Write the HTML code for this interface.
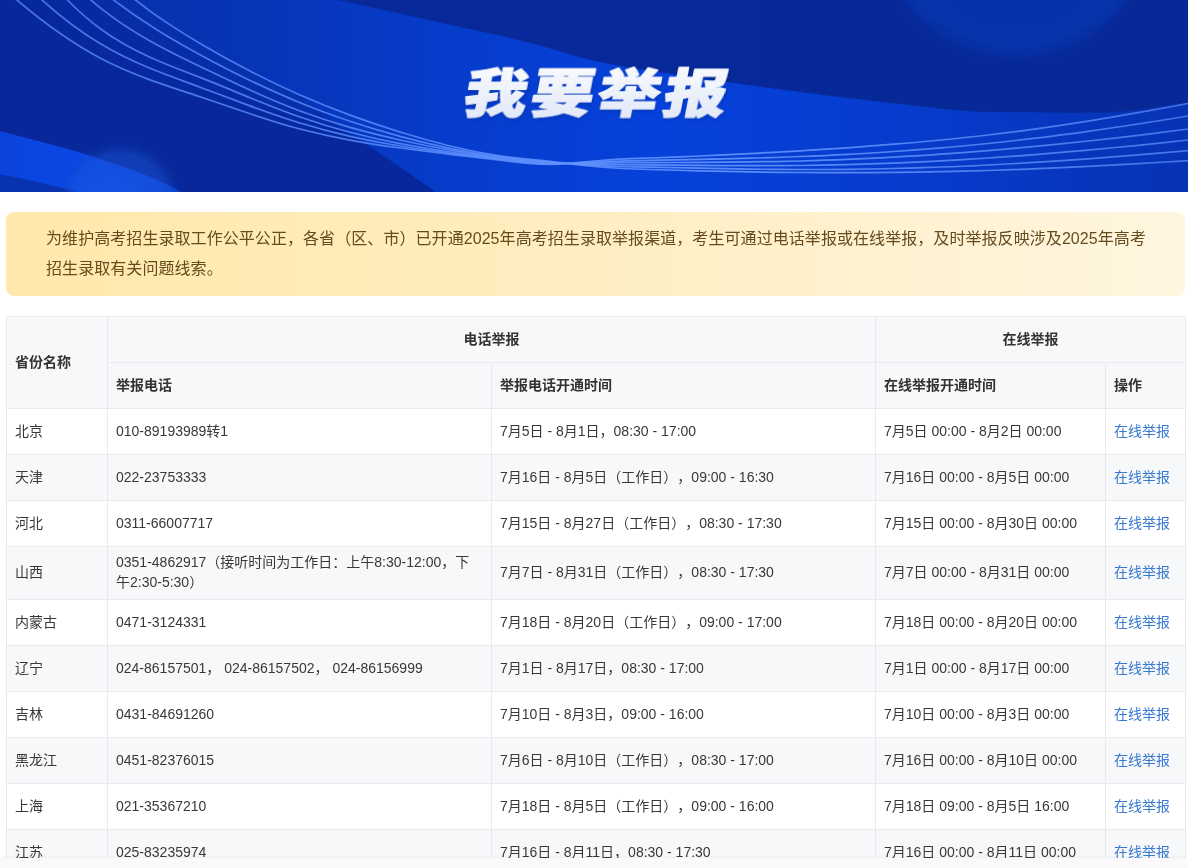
<!DOCTYPE html>
<html lang="zh-CN">
<head>
<meta charset="utf-8">
<title>我要举报</title>
<style>
*{box-sizing:border-box;}
html,body{margin:0;padding:0;background:#fff;}
body{text-spacing-trim:space-all;width:1188px;height:868px;overflow:hidden;position:relative;font-family:"Liberation Sans","Noto Sans CJK SC",sans-serif;font-size:14px;color:#333;}
.banner{position:absolute;left:0;top:0;width:1188px;height:192px;overflow:hidden;background:#0a2a9c;}
.banner svg{display:block;}
.notice{will-change:transform;position:absolute;left:6px;top:212px;width:1179px;height:84px;border-radius:8px;background:linear-gradient(90deg,#ffe8ab 0%,#ffeec2 50%,#fff6e0 100%);padding:12px 40px;font-size:16px;line-height:30px;color:#664b1e;letter-spacing:0.066px;font-family:"Liberation Sans","Noto Sans CJK SC",sans-serif;white-space:nowrap;}
table{will-change:transform;position:absolute;left:6px;top:316px;width:1180px;border-collapse:separate;border-spacing:0;border-top:1px solid #e8eaed;border-left:1px solid #e8eaed;table-layout:fixed;}
th,td{border-right:1px solid #e8eaed;border-bottom:1px solid #e8eaed;padding:5px 8px 7px;height:46px;line-height:20px;text-align:left;vertical-align:middle;font-size:14px;color:#383838;font-weight:normal;}
th{background:#f7f8fa;font-weight:bold;color:#333;}
th.c{text-align:center;}
tr.s td{background:#f7f8fa;}
td a{color:#3579d0;text-decoration:none;}
.foot{position:absolute;left:0;top:858px;width:1188px;height:10px;background:#fafafa;box-shadow:0 -1px 3px rgba(0,0,0,.05);}
</style>
</head>
<body>
<div class="banner">
<svg width="1188" height="192" viewBox="0 0 1188 192">
<defs>
<linearGradient id="gbase" x1="0" y1="0" x2="1188" y2="0" gradientUnits="userSpaceOnUse">
<stop offset="0" stop-color="#0730aa"/><stop offset="0.2" stop-color="#0734b5"/><stop offset="0.38" stop-color="#063cca"/><stop offset="0.55" stop-color="#0541da"/><stop offset="0.75" stop-color="#063cce"/><stop offset="1" stop-color="#0732b4"/></linearGradient>
<linearGradient id="gup" x1="338" y1="0" x2="1188" y2="0" gradientUnits="userSpaceOnUse"><stop offset="0" stop-color="#07299a"/><stop offset="1" stop-color="#072896"/></linearGradient>
<radialGradient id="gglow" cx="1016" cy="-83" r="148" gradientUnits="userSpaceOnUse"><stop offset="0" stop-color="#062fa4"/><stop offset="0.86" stop-color="#0733ab"/><stop offset="0.93" stop-color="#0731a8" stop-opacity="0.7"/><stop offset="1" stop-color="#072896" stop-opacity="0"/></radialGradient>
<radialGradient id="gglow2" cx="120" cy="204" r="64" gradientUnits="userSpaceOnUse"><stop offset="0" stop-color="#2264e6" stop-opacity="0.5"/><stop offset="0.78" stop-color="#1c58d8" stop-opacity="0.42"/><stop offset="1" stop-color="#1040b8" stop-opacity="0"/></radialGradient>
<linearGradient id="gband" x1="0" y1="0" x2="190" y2="0" gradientUnits="userSpaceOnUse"><stop offset="0" stop-color="#0a44dc"/><stop offset="0.5" stop-color="#0a48e6"/><stop offset="1" stop-color="#0a40d4"/></linearGradient>
<linearGradient id="gtxt" x1="0" y1="0" x2="0" y2="1"><stop offset="0" stop-color="#ffffff"/><stop offset="1" stop-color="#dde5f6"/></linearGradient>
<linearGradient id="gline" x1="0" y1="0" x2="1188" y2="0" gradientUnits="userSpaceOnUse"><stop offset="0" stop-color="#4f7ff0"/><stop offset="0.45" stop-color="#5e90ff"/><stop offset="0.6" stop-color="#6a9aff"/><stop offset="1" stop-color="#4f80f0"/></linearGradient>
<filter id="ts" x="-10%" y="-10%" width="120%" height="130%"><feDropShadow dx="1" dy="2" stdDeviation="1.5" flood-color="#06207a" flood-opacity="0.28"/></filter>
</defs>
<rect width="1188" height="192" fill="url(#gbase)"/>
<path d="M-5,-10 L9.0,-10 L9.0,-6.9 L18.0,0.9 L27.1,8.4 L36.1,15.6 L45.2,22.6 L54.2,29.3 L63.3,35.6 L72.3,41.7 L81.4,47.4 L90.4,52.7 L99.5,57.7 L108.5,62.4 L117.6,66.6 L126.6,70.6 L135.7,74.4 L144.7,77.9 L153.8,81.2 L162.8,84.4 L171.9,87.5 L180.9,90.5 L190.0,93.5 L199.0,96.5 L208.0,99.5 L217.1,102.6 L226.1,105.7 L235.2,108.7 L244.2,111.8 L253.3,114.8 L262.3,117.8 L271.4,120.7 L280.4,123.4 L289.5,126.1 L298.5,128.6 L307.6,131.0 L316.6,133.2 L325.7,135.2 L334.7,137.1 L343.8,139.0 L352.8,140.6 L361.9,142.2 L440,195 L-5,195 Z" fill="#08289a" fill-opacity="1"/>
<path d="M-5,-10 L34.0,-10 L34.0,-7.3 L42.2,0.2 L50.4,7.4 L58.7,14.2 L66.9,20.8 L75.1,26.9 L83.3,32.7 L91.5,38.2 L99.8,43.4 L108.0,48.1 L116.2,52.6 L124.4,56.8 L132.6,60.7 L140.9,64.4 L149.1,67.9 L157.3,71.2 L165.5,74.4 L173.7,77.5 L182.0,80.6 L190.2,83.6 L198.4,86.6 L206.6,89.7 L214.8,92.7 L223.1,95.8 L231.3,98.9 L239.5,102.0 L247.7,105.0 L255.9,108.0 L264.2,111.0 L272.4,113.9 L280.6,116.7 L288.8,119.5 L297.0,122.1 L305.3,124.6 L313.5,127.0 L321.7,129.3 L329.9,131.4 L338.2,133.5 L346.4,135.4 L354.6,137.3 L440,195 L-5,195 Z" fill="#08289a" fill-opacity="0.28"/>
<path d="M-5,-10 L59.3,-10 L59.3,-8.4 L66.6,-0.7 L74.0,6.5 L81.3,13.3 L88.6,19.6 L95.9,25.4 L103.3,30.9 L110.6,35.9 L117.9,40.5 L125.2,44.8 L132.6,48.8 L139.9,52.5 L147.2,56.0 L154.6,59.3 L161.9,62.4 L169.2,65.4 L176.5,68.3 L183.9,71.1 L191.2,74.0 L198.5,76.8 L205.9,79.7 L213.2,82.7 L220.5,85.6 L227.8,88.6 L235.2,91.6 L242.5,94.7 L249.8,97.7 L257.1,100.6 L264.5,103.6 L271.8,106.5 L279.1,109.3 L286.5,112.1 L293.8,114.8 L301.1,117.4 L308.4,119.9 L315.8,122.3 L323.1,124.6 L330.4,126.8 L337.7,128.9 L345.1,130.9 L440,195 L-5,195 Z" fill="#08289a" fill-opacity="0.28"/>
<path d="M-5,-10 L83.0,-10 L83.0,-7.8 L89.4,-1.5 L95.7,4.1 L102.1,9.3 L108.5,14.2 L114.9,18.8 L121.2,23.3 L127.6,27.5 L134.0,31.5 L140.4,35.4 L146.7,39.2 L153.1,42.7 L159.5,46.2 L165.9,49.6 L172.2,52.9 L178.6,56.1 L185.0,59.2 L191.3,62.3 L197.7,65.4 L204.1,68.5 L210.5,71.5 L216.8,74.6 L223.2,77.6 L229.6,80.6 L236.0,83.6 L242.3,86.6 L248.7,89.5 L255.1,92.4 L261.4,95.2 L267.8,98.0 L274.2,100.7 L280.6,103.4 L286.9,105.9 L293.3,108.5 L299.7,110.9 L306.1,113.2 L312.4,115.5 L318.8,117.7 L325.2,119.8 L331.6,121.8 L440,195 L-5,195 Z" fill="#08289a" fill-opacity="0.28"/>
<path d="M-5,-10 L105.6,-10 L105.6,-6.2 L110.8,-2.2 L116.0,1.8 L121.1,5.6 L126.3,9.4 L131.5,13.0 L136.7,16.6 L141.8,20.0 L147.0,23.4 L152.2,26.8 L157.4,30.0 L162.5,33.2 L167.7,36.3 L172.9,39.4 L178.1,42.4 L183.3,45.4 L188.4,48.3 L193.6,51.2 L198.8,54.0 L204.0,56.9 L209.1,59.6 L214.3,62.4 L219.5,65.1 L224.7,67.8 L229.9,70.4 L235.0,73.0 L240.2,75.6 L245.4,78.2 L250.6,80.7 L255.7,83.1 L260.9,85.6 L266.1,88.0 L271.3,90.3 L276.4,92.6 L281.6,94.9 L286.8,97.2 L292.0,99.4 L297.2,101.5 L302.3,103.7 L307.5,105.7 L440,195 L-5,195 Z" fill="#08289a" fill-opacity="0.28"/>
<path d="M-5,-10 L127.5,-10 L127.5,-6.5 L131.9,-2.9 L136.3,0.7 L140.8,4.1 L145.2,7.5 L149.6,10.8 L154.0,14.0 L158.5,17.1 L162.9,20.1 L167.3,23.1 L171.7,26.0 L176.2,28.9 L180.6,31.6 L185.0,34.4 L189.4,37.1 L193.8,39.8 L198.3,42.4 L202.7,45.0 L207.1,47.6 L211.5,50.1 L216.0,52.6 L220.4,55.1 L224.8,57.6 L229.2,60.0 L233.7,62.4 L238.1,64.8 L242.5,67.1 L246.9,69.5 L251.3,71.7 L255.8,74.0 L260.2,76.2 L264.6,78.5 L269.0,80.6 L273.5,82.8 L277.9,84.9 L282.3,87.0 L286.7,89.0 L291.2,91.0 L295.6,93.0 L300.0,95.0 L440,195 L-5,195 Z" fill="#08289a" fill-opacity="0.28"/>
<path d="M300.0,-9.0 C312.7,-6.0 325.3,-2.9 338.0,0.0 C356.8,4.3 375.7,8.5 394.5,12.6 C413.3,16.7 432.2,20.8 451.0,25.0 C463.7,27.8 476.3,30.5 489.0,33.3 C501.7,36.0 514.3,38.9 527.0,42.0 C539.2,45.0 551.3,48.8 563.5,52.4 C575.7,56.0 587.8,59.5 600.0,62.0 C616.7,65.4 633.3,68.2 650.0,70.7 C666.7,73.2 683.3,75.5 700.0,78.0 C716.7,80.5 733.3,82.9 750.0,85.3 C766.7,87.6 783.3,89.8 800.0,92.0 C816.7,94.2 833.3,96.3 850.0,98.3 C866.7,100.4 883.3,102.3 900.0,104.0 C914.7,105.5 929.3,107.4 944.0,109.0 C958.7,110.6 973.3,111.8 988.0,112.0 C1006.7,112.2 1025.3,112.4 1044.0,112.5 C1062.7,112.6 1081.3,112.7 1100.0,112.7 C1114.7,112.7 1129.3,111.1 1144.0,109.0 C1158.7,106.9 1173.3,104.2 1188.0,102.0 C1202.0,99.9 1216.0,97.0 1230.0,94.0 L1230,-10 L300,-10 Z" fill="url(#gup)"/>
<path d="M300.0,-9.0 C312.7,-6.0 325.3,-2.9 338.0,0.0 C356.8,4.3 375.7,8.5 394.5,12.6 C413.3,16.7 432.2,20.8 451.0,25.0 C463.7,27.8 476.3,30.5 489.0,33.3 C501.7,36.0 514.3,38.9 527.0,42.0 C539.2,45.0 551.3,48.8 563.5,52.4 C575.7,56.0 587.8,59.5 600.0,62.0 C616.7,65.4 633.3,68.2 650.0,70.7 C666.7,73.2 683.3,75.5 700.0,78.0 C716.7,80.5 733.3,82.9 750.0,85.3 C766.7,87.6 783.3,89.8 800.0,92.0 C816.7,94.2 833.3,96.3 850.0,98.3 C866.7,100.4 883.3,102.3 900.0,104.0 C914.7,105.5 929.3,107.4 944.0,109.0 C958.7,110.6 973.3,111.8 988.0,112.0 C1006.7,112.2 1025.3,112.4 1044.0,112.5 C1062.7,112.6 1081.3,112.7 1100.0,112.7 C1114.7,112.7 1129.3,111.1 1144.0,109.0 C1158.7,106.9 1173.3,104.2 1188.0,102.0 C1202.0,99.9 1216.0,97.0 1230.0,94.0 L1230,-10 L300,-10 Z" fill="url(#gglow)"/>
<path d="M-5,130 C30,139 70,148 121,166 C150,176 170,185 185,195 L-5,195 Z" fill="url(#gband)"/>
<path d="M-5,173.5 C20,178 55,185 88,195 L-5,195 Z" fill="#0932b0"/>
<circle cx="120" cy="204" r="64" fill="url(#gglow2)"/>
<g fill="none" stroke="url(#gline)" stroke-width="1.7" stroke-opacity="0.85">
<path d="M9.0,-6.9 C11.7,-4.6 14.3,-2.3 17.0,0.0 C30.8,11.7 44.7,22.6 58.5,32.3 C72.3,42.0 86.2,50.7 100.0,58.0 C116.7,66.8 133.3,73.7 150.0,79.9 C166.7,86.0 183.3,91.2 200.0,96.8 C216.7,102.4 233.3,108.2 250.0,113.7 C266.7,119.3 283.3,124.6 300.0,129.0 C316.7,133.4 333.3,137.1 350.0,140.1 C366.7,143.2 383.3,145.7 400.0,148.0 C416.7,150.3 433.3,152.3 450.0,154.3 C466.7,156.2 483.3,158.1 500.0,160.2 C516.7,162.3 533.3,164.5 550.0,164.4 C566.7,164.3 583.3,161.9 600.0,160.5 C616.7,159.1 633.3,158.6 650.0,158.0 C666.7,157.4 683.3,156.8 700.0,156.0 C716.7,155.3 733.3,154.5 750.0,153.6 C766.7,152.8 783.3,151.8 800.0,150.8 C815.7,149.9 831.3,148.9 847.0,147.8 C862.7,146.7 878.3,145.5 894.0,144.2 C909.7,143.0 925.3,141.6 941.0,140.0 C956.7,138.5 972.3,136.8 988.0,135.0 C1004.7,133.0 1021.3,130.9 1038.0,128.6 C1054.7,126.3 1071.3,123.8 1088.0,121.1 C1104.7,118.5 1121.3,115.7 1138.0,112.7 C1154.7,109.8 1171.3,106.7 1188.0,103.5 C1189.3,103.2 1190.7,103.0 1192.0,102.7"/>
<path d="M34.0,-7.3 C36.7,-4.8 39.3,-2.4 42.0,0.0 C61.3,17.3 80.7,31.9 100.0,43.5 C116.7,53.5 133.3,61.4 150.0,68.3 C166.7,75.1 183.3,81.0 200.0,87.2 C216.7,93.4 233.3,99.7 250.0,105.9 C266.7,112.0 283.3,117.9 300.0,123.0 C316.7,128.1 333.3,132.5 350.0,136.3 C366.7,140.0 383.3,143.2 400.0,146.0 C416.7,148.8 433.3,151.1 450.0,153.3 C466.7,155.4 483.3,157.4 500.0,159.4 C516.7,161.4 533.3,163.5 550.0,163.8 C566.7,164.1 583.3,162.7 600.0,161.8 C616.7,160.9 633.3,160.6 650.0,160.3 C666.7,160.0 683.3,159.7 700.0,159.3 C716.7,159.0 733.3,158.6 750.0,158.1 C766.7,157.7 783.3,157.2 800.0,156.5 C815.7,155.9 831.3,155.2 847.0,154.3 C862.7,153.5 878.3,152.6 894.0,151.5 C909.7,150.4 925.3,149.2 941.0,147.9 C956.7,146.6 972.3,145.1 988.0,143.5 C1004.7,141.8 1021.3,139.9 1038.0,137.9 C1054.7,135.9 1071.3,133.7 1088.0,131.4 C1104.7,129.1 1121.3,126.6 1138.0,124.0 C1154.7,121.5 1171.3,118.8 1188.0,116.0 C1189.3,115.8 1190.7,115.6 1192.0,115.3"/>
<path d="M59.3,-8.4 C62.0,-5.5 64.6,-2.7 67.3,0.0 C78.2,11.1 89.1,20.5 100.0,28.5 C116.7,40.8 133.3,49.7 150.0,57.2 C166.7,64.8 183.3,70.9 200.0,77.4 C216.7,83.9 233.3,90.9 250.0,97.7 C266.7,104.5 283.3,111.2 300.0,117.0 C316.7,122.8 333.3,127.9 350.0,132.2 C366.7,136.6 383.3,140.4 400.0,143.6 C416.7,146.8 433.3,149.6 450.0,152.0 C466.7,154.5 483.3,156.6 500.0,158.6 C516.7,160.6 533.3,162.5 550.0,163.2 C566.7,163.9 583.3,163.4 600.0,163.1 C616.7,162.8 633.3,162.7 650.0,162.6 C666.7,162.5 683.3,162.5 700.0,162.4 C716.7,162.3 733.3,162.1 750.0,161.9 C766.7,161.7 783.3,161.4 800.0,161.0 C815.7,160.6 831.3,160.1 847.0,159.4 C862.7,158.8 878.3,158.0 894.0,157.1 C909.7,156.3 925.3,155.3 941.0,154.2 C956.7,153.1 972.3,151.9 988.0,150.6 C1004.7,149.2 1021.3,147.7 1038.0,146.1 C1054.7,144.5 1071.3,142.8 1088.0,141.0 C1104.7,139.2 1121.3,137.3 1138.0,135.3 C1154.7,133.3 1171.3,131.2 1188.0,129.0 C1189.3,128.8 1190.7,128.6 1192.0,128.5"/>
<path d="M83.0,-7.8 C85.7,-5.0 88.3,-2.4 91.0,0.0 C94.0,2.7 97.0,5.2 100.0,7.6 C116.7,20.9 133.3,31.6 150.0,41.0 C166.7,50.4 183.3,58.5 200.0,66.5 C216.7,74.5 233.3,82.5 250.0,90.1 C266.7,97.7 283.3,104.8 300.0,111.0 C316.7,117.2 333.3,122.6 350.0,127.4 C366.7,132.1 383.3,136.2 400.0,140.0 C416.7,143.8 433.3,147.2 450.0,150.1 C466.7,153.1 483.3,155.7 500.0,157.8 C516.7,159.9 533.3,161.5 550.0,162.6 C566.7,163.7 583.3,164.1 600.0,164.4 C616.7,164.7 633.3,164.8 650.0,164.9 C666.7,165.0 683.3,165.2 700.0,165.3 C716.7,165.5 733.3,165.6 750.0,165.7 C766.7,165.7 783.3,165.7 800.0,165.5 C815.7,165.3 831.3,165.0 847.0,164.6 C862.7,164.2 878.3,163.7 894.0,163.1 C909.7,162.4 925.3,161.7 941.0,160.8 C956.7,160.0 972.3,159.0 988.0,158.0 C1004.7,156.9 1021.3,155.7 1038.0,154.3 C1054.7,153.0 1071.3,151.6 1088.0,150.1 C1104.7,148.6 1121.3,147.0 1138.0,145.3 C1154.7,143.6 1171.3,141.8 1188.0,140.0 C1189.3,139.9 1190.7,139.7 1192.0,139.6"/>
<path d="M105.6,-6.2 C108.3,-4.1 110.9,-2.0 113.6,0.0 C128.0,10.9 142.4,20.7 156.8,29.7 C171.2,38.7 185.6,46.9 200.0,54.7 C216.7,63.8 233.3,72.4 250.0,80.4 C266.7,88.4 283.3,95.9 300.0,102.7 C316.7,109.5 333.3,115.7 350.0,121.3 C366.7,126.9 383.3,131.9 400.0,136.4 C416.7,140.9 433.3,144.9 450.0,148.3 C466.7,151.8 483.3,154.6 500.0,156.8 C516.7,159.0 533.3,160.5 550.0,162.0 C566.7,163.5 583.3,164.8 600.0,165.7 C616.7,166.6 633.3,166.9 650.0,167.2 C666.7,167.5 683.3,167.9 700.0,168.2 C716.7,168.5 733.3,168.8 750.0,169.1 C766.7,169.3 783.3,169.5 800.0,169.5 C815.7,169.5 831.3,169.5 847.0,169.3 C862.7,169.1 878.3,168.9 894.0,168.5 C909.7,168.1 925.3,167.6 941.0,167.0 C956.7,166.5 972.3,165.8 988.0,165.0 C1004.7,164.2 1021.3,163.2 1038.0,162.2 C1054.7,161.1 1071.3,160.0 1088.0,158.8 C1104.7,157.5 1121.3,156.2 1138.0,154.9 C1154.7,153.5 1171.3,152.1 1188.0,150.6 C1189.3,150.5 1190.7,150.4 1192.0,150.2"/>
<path d="M127.5,-6.5 C130.2,-4.3 132.8,-2.1 135.5,0.0 C146.2,8.6 157.0,16.3 167.8,23.4 C178.5,30.5 189.2,37.1 200.0,43.4 C216.7,53.2 233.3,62.4 250.0,71.1 C266.7,79.7 283.3,87.7 300.0,95.0 C316.7,102.3 333.3,109.0 350.0,115.1 C366.7,121.2 383.3,126.8 400.0,132.0 C416.7,137.2 433.3,141.9 450.0,146.0 C466.7,150.1 483.3,153.4 500.0,155.8 C516.7,158.2 533.3,159.6 550.0,161.4 C566.7,163.2 583.3,165.6 600.0,167.0 C616.7,168.4 633.3,169.0 650.0,169.5 C666.7,170.0 683.3,170.5 700.0,170.9 C716.7,171.3 733.3,171.6 750.0,171.9 C766.7,172.2 783.3,172.4 800.0,172.5 C815.7,172.6 831.3,172.7 847.0,172.7 C862.7,172.7 878.3,172.6 894.0,172.4 C909.7,172.3 925.3,172.0 941.0,171.7 C956.7,171.4 972.3,171.0 988.0,170.5 C1004.7,170.0 1021.3,169.4 1038.0,168.7 C1054.7,168.0 1071.3,167.2 1088.0,166.3 C1104.7,165.5 1121.3,164.6 1138.0,163.6 C1154.7,162.7 1171.3,161.7 1188.0,160.7 C1189.3,160.6 1190.7,160.5 1192.0,160.5"/>
</g>
<g transform="translate(594.5,112.6) skewX(-11) scale(1.2,1)" filter="url(#ts)"><text x="0" y="0" text-anchor="middle" font-family="'Noto Sans CJK SC',sans-serif" font-weight="900" font-size="52.5" letter-spacing="3" fill="url(#gtxt)" stroke="url(#gtxt)" stroke-width="1.2" stroke-linejoin="round">我要举报</text></g>
</svg>
</div>
<div class="notice">为维护高考招生录取工作公平公正，各省（区、市）已开通2025年高考招生录取举报渠道，考生可通过电话举报或在线举报，及时举报反映涉及2025年高考<br>招生录取有关问题线索。</div>
<table>
<colgroup><col style="width:101px"><col style="width:384px"><col style="width:384px"><col style="width:230px"><col style="width:80px"></colgroup>
<thead>
<tr><th rowspan="2">省份名称</th><th colspan="2" class="c">电话举报</th><th colspan="2" class="c">在线举报</th></tr>
<tr><th>举报电话</th><th>举报电话开通时间</th><th>在线举报开通时间</th><th>操作</th></tr>
</thead>
<tbody>
<tr><td>北京</td><td>010-89193989转1</td><td>7月5日 - 8月1日，08:30 - 17:00</td><td>7月5日 00:00 - 8月2日 00:00</td><td><a>在线举报</a></td></tr>
<tr class="s"><td>天津</td><td>022-23753333</td><td>7月16日 - 8月5日（工作日），09:00 - 16:30</td><td>7月16日 00:00 - 8月5日 00:00</td><td><a>在线举报</a></td></tr>
<tr><td>河北</td><td>0311-66007717</td><td>7月15日 - 8月27日（工作日），08:30 - 17:30</td><td>7月15日 00:00 - 8月30日 00:00</td><td><a>在线举报</a></td></tr>
<tr class="s"><td>山西</td><td>0351-4862917（接听时间为工作日：上午8:30-12:00，下<br>午2:30-5:30）</td><td>7月7日 - 8月31日（工作日），08:30 - 17:30</td><td>7月7日 00:00 - 8月31日 00:00</td><td><a>在线举报</a></td></tr>
<tr><td>内蒙古</td><td>0471-3124331</td><td>7月18日 - 8月20日（工作日），09:00 - 17:00</td><td>7月18日 00:00 - 8月20日 00:00</td><td><a>在线举报</a></td></tr>
<tr class="s"><td>辽宁</td><td>024-86157501， 024-86157502， 024-86156999</td><td>7月1日 - 8月17日，08:30 - 17:00</td><td>7月1日 00:00 - 8月17日 00:00</td><td><a>在线举报</a></td></tr>
<tr><td>吉林</td><td>0431-84691260</td><td>7月10日 - 8月3日，09:00 - 16:00</td><td>7月10日 00:00 - 8月3日 00:00</td><td><a>在线举报</a></td></tr>
<tr class="s"><td>黑龙江</td><td>0451-82376015</td><td>7月6日 - 8月10日（工作日），08:30 - 17:00</td><td>7月16日 00:00 - 8月10日 00:00</td><td><a>在线举报</a></td></tr>
<tr><td>上海</td><td>021-35367210</td><td>7月18日 - 8月5日（工作日），09:00 - 16:00</td><td>7月18日 09:00 - 8月5日 16:00</td><td><a>在线举报</a></td></tr>
<tr class="s"><td>江苏</td><td>025-83235974</td><td>7月16日 - 8月11日，08:30 - 17:30</td><td>7月16日 00:00 - 8月11日 00:00</td><td><a>在线举报</a></td></tr>
</tbody>
</table>
<div class="foot"></div>
</body>
</html>
